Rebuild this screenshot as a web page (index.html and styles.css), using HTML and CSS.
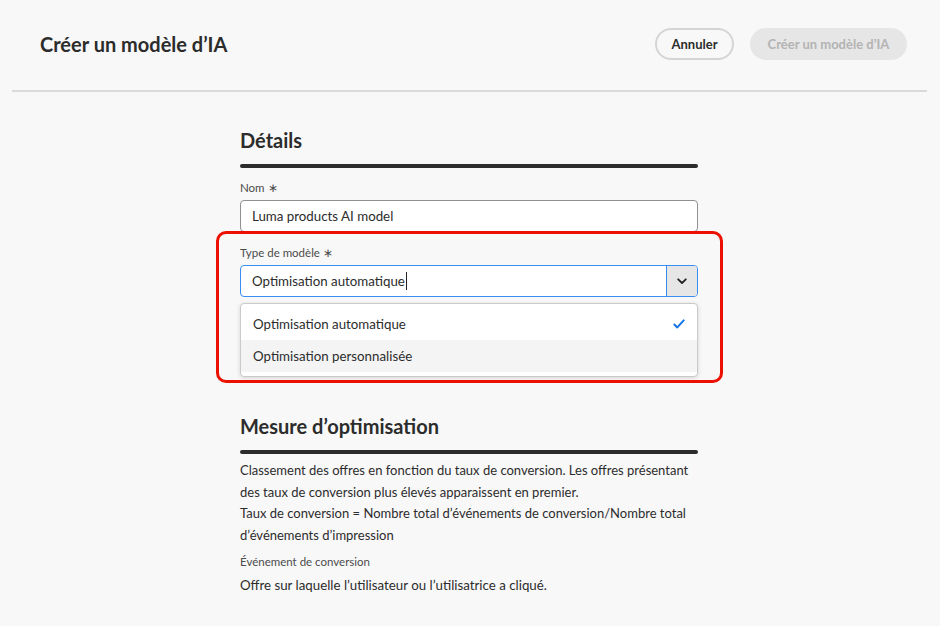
FILE: index.html
```html
<!DOCTYPE html>
<html lang="fr">
<head>
<meta charset="utf-8">
<title>Créer un modèle d’IA</title>
<link rel="stylesheet" href="styles.css">
</head>
<body>
<header class="topbar">
  <h1 class="title">Créer un modèle d’IA</h1>
  <div class="actions">
    <button class="btn btn-secondary">Annuler</button>
    <button class="btn btn-disabled">Créer un modèle d’IA</button>
  </div>
</header>
<div class="divider"></div>
<main class="content">
  <section class="section">
    <h2 class="section-title">Détails</h2>
    <div class="section-bar"></div>
    <div class="field">
      <label class="field-label">Nom <span class="req">∗</span></label>
      <div class="textfield">Luma products AI model</div>
    </div>
    <div class="highlight-zone">
      <div class="field">
        <label class="field-label">Type de modèle <span class="req">∗</span></label>
        <div class="combobox">
          <div class="combo-input">Optimisation automatique<span class="caret"></span></div>
          <div class="combo-button">
            <svg width="10" height="7" viewBox="0 0 10 7"><path d="M1.2 1.3 L5 5 L8.8 1.3" fill="none" stroke="#222" stroke-width="1.8" stroke-linecap="round" stroke-linejoin="round"/></svg>
          </div>
        </div>
      </div>
      <div class="field field-hidden">
        <div class="textfield"></div>
      </div>
      <div class="popover">
        <div class="option">
          <span>Optimisation automatique</span>
          <svg width="12" height="10" viewBox="0 0 12 10"><path d="M1.3 5.6 L4.3 8.4 L10.7 1.4" fill="none" stroke="#1473e6" stroke-width="2" stroke-linecap="round" stroke-linejoin="round"/></svg>
        </div>
        <div class="option option-hover"><span>Optimisation personnalisée</span></div>
      </div>
      <div class="red-outline"></div>
    </div>
  </section>
  <section class="section section-second">
    <h2 class="section-title">Mesure d’optimisation</h2>
    <div class="section-bar"></div>
    <p class="desc">Classement des offres en fonction du taux de conversion. Les offres présentant des taux de conversion plus élevés apparaissent en premier.<br>Taux de conversion = Nombre total d’événements de conversion/Nombre total d’événements d’impression</p>
    <div class="meta-label">Événement de conversion</div>
    <div class="meta-value">Offre sur laquelle l’utilisateur ou l’utilisatrice a cliqué.</div>
  </section>
</main>
</body>
</html>
```
FILE: styles.css
```css
* { box-sizing: border-box; }
html, body { margin: 0; padding: 0; }
body {
  background: #f8f8f8;
  font-family: "Lato", "Noto Sans", sans-serif;
  color: #222;
  width: 940px;
  height: 626px;
  overflow: hidden;
}
.topbar {
  height: 90px;
  display: flex;
  align-items: center;
  justify-content: space-between;
  padding: 0 33px 2px 40px;
}
.title {
  margin: 0;
  font-size: 20px;
  font-weight: 700;
  color: #2c2c2c;
}
.actions { display: flex; gap: 16px; }
.btn {
  height: 32px;
  border-radius: 16px;
  font-family: inherit;
  font-size: 13px;
  font-weight: 700;
  padding: 0;
  white-space: nowrap;
}
.btn-secondary {
  background: #f8f8f8;
  border: 2px solid #d5d5d5;
  color: #2c2c2c;
  width: 79px;
}
.btn-disabled {
  background: #e6e6e6;
  border: 2px solid #e6e6e6;
  color: #b3b3b3;
  width: 157px;
}
.divider {
  height: 2px;
  background: #dadada;
  margin: 0 13px 0 12px;
}
.content {
  width: 458px;
  margin-left: 240px;
  padding-top: 35px;
}
.section-title {
  margin: 0;
  font-size: 20px;
  font-weight: 700;
  line-height: 26px;
  color: #2c2c2c;
}
.section-bar {
  height: 4px;
  border-radius: 2px;
  background: #2c2c2c;
  margin-top: 11px;
  margin-bottom: 12px;
}
.field { display: flex; flex-direction: column; }
.field-hidden { padding-top: 20px; }
.field-label {
  font-size: 11.5px;
  line-height: 16px;
  color: #4b4b4b;
  margin-bottom: 4px;
}
.req { color: #4b4b4b; }
.textfield {
  height: 32px;
  background: #fff;
  border: 1px solid #909090;
  border-radius: 4px;
  padding: 0 11px;
  font-size: 13.3px;
  line-height: 30px;
  color: #2c2c2c;
}
.highlight-zone {
  position: relative;
  padding-top: 13px;
  display: flex;
  flex-direction: column;
  gap: 23px;
}
.combobox {
  display: flex;
  height: 32px;
  border: 1px solid #378ef0;
  border-radius: 4px;
  overflow: hidden;
  background: #fff;
}
.combo-input {
  flex: 1;
  padding: 0 11px;
  font-size: 13.3px;
  line-height: 30px;
  color: #2c2c2c;
  display: flex;
  align-items: center;
}
.caret {
  display: inline-block;
  width: 1px;
  height: 18px;
  background: #222;
  margin-left: 1px;
}
.combo-button {
  width: 31px;
  background: #e6e6e6;
  border-left: 1px solid #378ef0;
  display: flex;
  align-items: center;
  justify-content: center;
}
.popover {
  position: absolute;
  left: 0;
  right: 0;
  top: 71px;
  background: #fff;
  border: 1px solid #cacaca;
  border-radius: 4px;
  box-shadow: 0 1px 4px rgba(0,0,0,0.15);
  padding: 4px 0;
}
.option {
  height: 32px;
  display: flex;
  align-items: center;
  justify-content: space-between;
  padding: 0 12px 0 12px;
  font-size: 13.3px;
  color: #2c2c2c;
}
.option-hover { background: #f4f4f4; }
.red-outline {
  position: absolute;
  left: -24px;
  right: -25px;
  top: -1px;
  height: 152px;
  border: 3px solid #eb1000;
  border-radius: 10px;
  pointer-events: none;
}
.section-second { margin-top: 41px; }
.section-second .section-bar { margin-bottom: 6px; }
.desc {
  margin: 0;
  font-size: 13px;
  line-height: 21.7px;
  color: #2c2c2c;
}
.meta-label {
  margin-top: 7px;
  font-size: 11.5px;
  line-height: 16px;
  color: #4b4b4b;
}
.meta-value {
  margin-top: 5px;
  font-size: 13.3px;
  line-height: 21px;
  color: #2c2c2c;
}
```
